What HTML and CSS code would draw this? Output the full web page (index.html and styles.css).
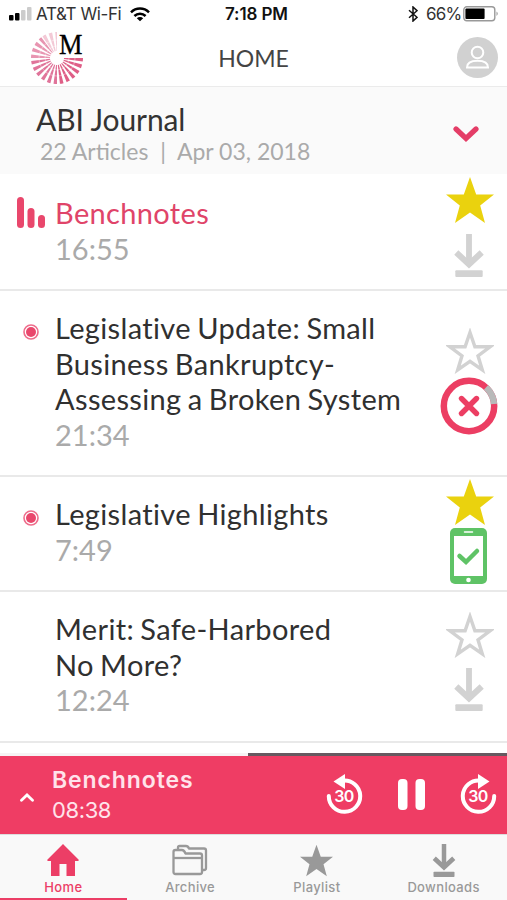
FILE: index.html
```html
<!DOCTYPE html>
<html lang="en">
<head>
<meta charset="utf-8">
<title>Home</title>
<link rel="stylesheet" href="styles.css">
</head>
<body>
<svg class="defs" width="0" height="0">
  <symbol id="star" viewBox="0 0 48 46"><path d="M24 0l6.2 17.4H48L34.2 28.4 39 46 24 35.4 9 46l4.8-17.6L0 17.4h17.8z"/></symbol>
  <symbol id="star-line" viewBox="0 0 48 46"><path d="M24 4.5l4.900 14.300h15.200L32 27.800l4.300 14.100L24 33.400l-12.300 8.500L16 27.800 3.900 18.800h15.200z" fill="none" stroke="currentColor" stroke-width="3.400"/></symbol>
  <symbol id="download" viewBox="0 0 30 44"><path d="M15 0v28" fill="none" stroke="currentColor" stroke-width="6"/><path d="M2 19l13 12 13-12" fill="none" stroke="currentColor" stroke-width="6.200"/><rect x="1" y="37" width="28" height="7" rx="1"/></symbol>
</svg>
<div class="screen">
  <div class="status">
    <svg class="signal" width="24" height="15" viewBox="0 0 24 15"><rect x="0" y="8" width="4.500" height="5.500" rx="1"/><rect x="6" y="6" width="4.500" height="7.500" rx="1"/><g fill="#ccc"><rect x="12" y="3" width="4.500" height="10.500" rx="1"/><rect x="18" y="0" width="4.500" height="13.500" rx="1"/></g></svg>
    <span class="carrier">AT&amp;T Wi-Fi</span>
    <svg class="wifi" width="20" height="15" viewBox="0 0 20 15"><g fill="none" stroke="#000" stroke-width="2.500"><path d="M1 5.300a12.800 12.800 0 0 1 18 0"/><path d="M4.400 9a8 8 0 0 1 11.200 0"/></g><path d="M10 14.300L6.800 11.300a4.600 4.600 0 0 1 6.400 0z"/></svg>
    <span class="clock">7:18 PM</span>
    <svg class="bluetooth" width="10" height="16" viewBox="0 0 10 16"><path d="M1 4.300l8 7L5 15V1l4 3.700-8 7" fill="none" stroke="#111" stroke-width="1.500"/></svg>
    <span class="percent">66%</span>
    <svg class="battery" width="36" height="16" viewBox="0 0 36 16"><rect x=".8" y=".8" width="31" height="14" rx="3" fill="#fff" stroke="#999" stroke-width="1.400"/><rect x="2.400" y="2.600" width="19.200" height="10.400" rx="1"/><path d="M33.500 5.500q2.500 2.200 0 4.400z" fill="#999"/></svg>
  </div>
  <header class="nav">
    <div class="logo">
      <svg width="54" height="56" viewBox="0 0 54 56"><g fill="none" stroke-dasharray="2.300 2">
        <path d="M43.500 29A16.500 16.500 0 0 1 27 45.500" stroke="#df5f87" stroke-width="19"/>
        <path d="M27 45.500A16.500 16.500 0 0 1 10.500 29" stroke="#e0749a" stroke-width="19"/>
        <path d="M10.500 29A16.500 16.500 0 0 1 17 15.900" stroke="#e895b1" stroke-width="19"/>
        <path d="M17.800 15.300A16.500 16.500 0 0 1 27 12.500" stroke="#f3c9d6" stroke-width="19"/></g>
        <circle cx="27" cy="29" r="12" fill="none" stroke="#fff" stroke-opacity=".4" stroke-width="1"/><circle cx="27" cy="29" r="18" fill="none" stroke="#fff" stroke-opacity=".4" stroke-width="1"/></svg>
      <span class="logo-letter">M</span>
    </div>
    <h1>HOME</h1>
    <svg class="avatar" width="41" height="41" viewBox="0 0 41 41"><circle cx="20.500" cy="20.500" r="20.500" fill="#d1d1d1"/><g fill="none" stroke="#fff" stroke-width="2"><circle cx="20.500" cy="15.500" r="5.800"/><path d="M10 30.500c0-4.300 3-6.700 10.500-6.700S31 26.200 31 30.500z"/></g></svg>
  </header>
  <section class="issue">
    <div><h2>ABI Journal</h2><p>22 Articles&nbsp; |&nbsp; Apr 03, 2018</p></div>
    <svg width="26" height="17" viewBox="0 0 26 17"><path d="M3 3l10 9.500L23 3" fill="none" stroke="#e43d67" stroke-width="5.200" stroke-linecap="round"/></svg>
  </section>
  <main>
    <article class="row first playing">
      <svg class="mark bars" width="29" height="31" viewBox="0 0 29 31"><rect x="0" width="7" height="31" rx="3.500"/><rect x="10.500" y="11" width="7" height="20" rx="3.500"/><rect x="21" y="18" width="7" height="13" rx="3.500"/></svg>
      <div class="text"><h3>Benchnotes</h3><time>16:55</time></div>
      <div class="actions"><svg class="star gold"><use href="#star"/></svg><svg class="down"><use href="#download"/></svg></div>
    </article>
    <article class="row second">
      <svg class="mark dot" width="16" height="16" viewBox="0 0 16 16"><circle cx="8" cy="8" r="7" fill="#fff" stroke="#ee6c8b" stroke-width="1.600"/><circle cx="8" cy="8" r="5"/></svg>
      <div class="text"><h3>Legislative Update: Small<br>Business Bankruptcy-<br>Assessing a Broken System</h3><time>21:34</time></div>
      <div class="actions"><svg class="star"><use href="#star-line"/></svg>
        <svg class="cancel" width="58" height="58" viewBox="0 0 58 58"><g fill="none" stroke="#ec3e63" stroke-width="6.500"><circle cx="29" cy="29" r="25.200"/><path d="M46 10.400A25.200 25.200 0 0 1 54.100 27" stroke="#b9b9b9"/><path d="M21.500 21.500l15 15m0-15l-15 15" stroke-width="5.400" stroke-linecap="round"/></g></svg></div>
    </article>
    <article class="row third">
      <svg class="mark dot" width="16" height="16" viewBox="0 0 16 16"><circle cx="8" cy="8" r="7" fill="#fff" stroke="#ee6c8b" stroke-width="1.600"/><circle cx="8" cy="8" r="5"/></svg>
      <div class="text"><h3>Legislative Highlights</h3><time>7:49</time></div>
      <div class="actions"><svg class="star gold"><use href="#star"/></svg>
        <svg class="phone" width="37" height="56" viewBox="0 0 37 56"><rect width="37" height="56" rx="5" fill="#5fc366"/><rect x="4" y="8" width="29" height="40" fill="#fff"/><path d="M14.500 4h8" stroke="#fff" stroke-width="1.500" stroke-linecap="round"/><circle cx="18.500" cy="52" r="2.300" fill="#fff"/><path d="M9.500 28l6.500 6 11-11" fill="none" stroke="#5fc366" stroke-width="4.500" stroke-linecap="round"/></svg></div>
    </article>
    <article class="row fourth">
      <div class="text"><h3>Merit: Safe-Harbored<br>No More?</h3><time>12:24</time></div>
      <div class="actions"><svg class="star"><use href="#star-line"/></svg><svg class="down"><use href="#download"/></svg></div>
    </article>
  </main>
  <div class="progress"><div></div></div>
  <section class="player">
    <svg class="up" width="14" height="9" viewBox="0 0 14 9"><path d="M1.500 7.300L7 2l5.500 5.300" fill="none" stroke="#fff" stroke-width="2.800" stroke-linecap="round"/></svg>
    <div class="now"><strong>Benchnotes</strong><span>08:38</span></div>
    <div class="controls">
      <div class="skip"><svg width="37" height="40" viewBox="0 0 37 40"><path d="M17 6.500A15.700 15.700 0 1 1 2.800 22" fill="none" stroke="#fff" stroke-width="4" stroke-linecap="round"/><path d="M7.500 7.500L19 0v15z" fill="#fff"/></svg><span>30</span></div>
      <svg class="pause" width="27" height="31" viewBox="0 0 27 31"><rect width="9.500" height="31" rx="4"/><rect x="17.500" width="9.500" height="31" rx="4"/></svg>
      <div class="skip"><svg width="37" height="40" viewBox="0 0 37 40"><path d="M20 6.500A15.700 15.700 0 1 0 34.200 22" fill="none" stroke="#fff" stroke-width="4" stroke-linecap="round"/><path d="M29.500 7.500L18 0v15z" fill="#fff"/></svg><span>30</span></div>
    </div>
  </section>
  <nav class="tabs">
    <a class="active"><svg width="32" height="33" viewBox="0 0 32 33"><path d="M16 0l15.500 15.500q1 1.500-1 1.500H28v15H19.500V20h-7v12H4V17H1.500q-2 0-1-1.500z"/></svg>Home</a>
    <a><svg width="36" height="33" viewBox="0 0 36 33"><g fill="none" stroke="#999" stroke-width="2.300" stroke-linejoin="round"><path d="M6 5V3.500Q6 2 7.500 2H14q2 0 3 2.500h15q2 0 2 2V24q0 2-2 2h-2"/><path d="M1.500 8q0-2 2-2H10q2 0 3.500 3.500H28q2 0 2 2V28q0 2-2 2H3.500q-2 0-2-2z"/><path d="M1.500 14H30"/></g></svg>Archive</a>
    <a><svg width="33" height="33"><use href="#star"/></svg>Playlist</a>
    <a><svg width="24" height="33"><use href="#download"/></svg>Downloads</a>
  </nav>
</div>
</body>
</html>
```
FILE: styles.css
```css
* { box-sizing: border-box; }
body { margin: 0; background: #fff; font-family: Lato, "Liberation Sans", sans-serif; }
h1, h2, h3, p { margin: 0; font-weight: 400; }
svg { display: block; flex: none; }
.defs { position: absolute; }
.screen { width: 507px; height: 900px; display: flex; flex-direction: column; overflow: hidden; }
.status { height: 28px; display: flex; align-items: center; padding-left: 9px; font: 17px/28px Inter, sans-serif; color: #111; flex: none; white-space: nowrap; }
.carrier { width: 86px; margin-left: 3px; color: #333; letter-spacing: -.4px; }
.wifi { margin-left: 8px; }
.clock { margin-left: 75px; width: 64px; font-weight: 600; letter-spacing: -.1px; }
.bluetooth { margin-left: 119px; }
.percent { margin-left: 8px; width: 34px; color: #333; letter-spacing: -.8px; }
.battery { margin-left: 3px; }
.nav { height: 58px; flex: none; display: grid; grid-template-columns: 1fr 80px 1fr; align-items: center; }
.nav h1 { font-size: 23px; line-height: 30px; text-align: center; color: #444; padding-top: 2px; white-space: nowrap; }
.logo { position: relative; margin-left: 30px; width: 54px; height: 56px; }
.logo-letter { position: absolute; left: 29px; top: 0; font: 30px/30px "Liberation Serif", serif; -webkit-text-stroke: .3px #000; transform: scaleX(.88); transform-origin: left; color: #000; }
.avatar { justify-self: end; margin-right: 9px; }
.issue { height: 88px; flex: none; background: #fafafa; border-top: 1px solid #ebebeb; display: flex; justify-content: space-between; align-items: center; padding: 0 28px 0 36px; }
.issue h2 { font-size: 30px; line-height: 36px; color: #333; padding-top: 5px; letter-spacing: -.1px; }
.issue p { font-size: 23px; line-height: 29px; color: #aaa; padding-left: 4px; }
.issue svg { margin-top: 8px; }
.row { display: grid; grid-template-columns: 55px 1fr 74px; border-bottom: 2px solid #e9e9e9; }
.first { height: 117px; } .second { height: 186px; } .third { height: 115px; } .fourth { height: 151px; }
.text { grid-column: 2; padding-top: 19px; white-space: nowrap; }
.first .text { padding-top: 21px; }
h3, time { display: block; font-size: 29px; line-height: 35.5px; color: #303030; }
h3 { letter-spacing: .35px; word-spacing: -1.5px; }
time { color: #aaa; }
.mark { fill: #e9476c; grid-row: 1; grid-column: 1; }
.bars { margin: 23px 0 0 17px; }
.dot { margin: 33px 0 0 23px; }
.playing h3 { color: #e04469; }
.actions { grid-column: 3; display: flex; flex-direction: column; align-items: center; }
.first .actions { padding-top: 3px; }
.second .actions { padding-top: 37px; }
.third .actions { padding-top: 2px; }
.fourth .actions { padding-top: 20px; }
.star { width: 48px; height: 46px; color: #d2d2d2; }
.gold { fill: #ead20e; }
.down { width: 30px; height: 43px; margin-top: 11px; margin-right: 3px; fill: #d2d2d2; color: #d2d2d2; }
.fourth .down { margin-top: 10px; }
.cancel { margin-top: 3px; margin-right: 2px; }
.phone { margin-top: 3px; margin-right: 3px; }
.progress { margin-top: auto; height: 3px; background: #f6f3f4; padding-left: 248px; flex: none; }
.progress div { height: 3px; background: #665960; }
.player { height: 78px; flex: none; background: #ef3d64; color: #fff; display: flex; align-items: center; padding-left: 20px; }
.up { margin-top: 5px; }
.now { margin-left: 18px; width: 274px; font-family: Inter, sans-serif; }
.now strong, .now span { display: block; font-size: 23px; line-height: 30px; color: #ffe3eb; }
.now strong { font-weight: 600; letter-spacing: .9px; }
.now span { font-size: 22px; letter-spacing: -.4px; }
.controls { display: flex; align-items: center; gap: 35px; }
.pause { fill: #fff; margin-top: -2px; }
.skip { position: relative; margin-top: -3px; }
.skip span { position: absolute; left: 0; top: 12px; width: 36px; text-align: center; font: 600 16px/20px Inter, sans-serif; letter-spacing: -.5px; }
.tabs { height: 66px; flex: none; background: #f9f9f9; border-top: 1px solid #ddd; display: grid; grid-template-columns: repeat(4, 1fr); }
.tabs a { display: flex; flex-direction: column; align-items: center; font: 500 13px/16px Inter, sans-serif; letter-spacing: .35px; color: #999; fill: #999; padding-top: 9px; gap: 2px; }
.tabs .active { color: #ec3e66; fill: #ec3e66; border-bottom: 2px solid #ec3e66; }
```
